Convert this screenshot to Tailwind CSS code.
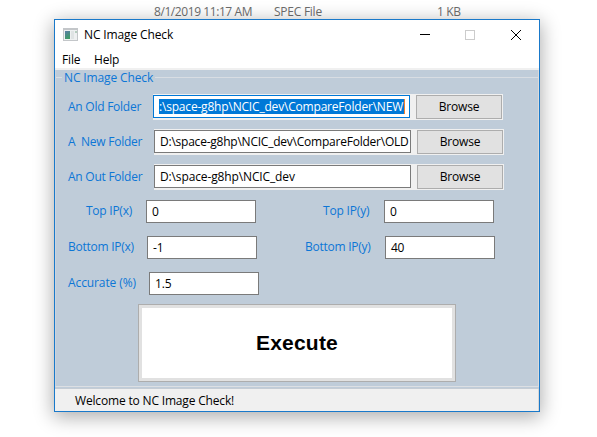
<!DOCTYPE html>
<html lang="en">
<head>
<meta charset="utf-8">
<title>NC Image Check</title>
<script src="https://cdn.jsdelivr.net/npm/@tailwindcss/browser@4"></script>
</head>
<body class="w-[597px] h-[437px] overflow-hidden bg-white font-['Open_Sans','Noto_Sans',sans-serif] text-[12px] leading-4 text-black tracking-[-0.17px] whitespace-nowrap">
<div class="flex h-[19px] pt-[4px] text-[#6d6d6d]">
  <span class="ml-[154px] w-[120px] tracking-[-0.42px]">8/1/2019 11:17 AM</span>
  <span class="w-[163px] tracking-[-0.25px]">SPEC File</span>
  <span class="tracking-[-0.35px]">1 KB</span>
</div>
<main class="relative ml-[54px] w-[486px] h-[393px] border border-[#1979ca] bg-white flex flex-col shadow-[0_4px_18px_1px_rgba(0,0,0,0.33)]">
  <header class="h-[29px] flex items-center pl-[8px]">
    <svg width="16" height="14" viewBox="0 0 16 14" shape-rendering="crispEdges">
      <defs><linearGradient id="g" x2="0.4" y2="1"><stop stop-color="#5a7ca8"/><stop offset="1" stop-color="#3f9a68"/></linearGradient></defs>
      <path fill="#c3c6c9" d="M0 0h15v13H0z"/><path fill="#eef0f1" d="M1 2h13v10H1z"/>
      <path fill="url(#g)" d="M2 3h5v8H2z"/><path fill="#dfe3e4" d="M8 3h3v8H8z"/><path fill="#b5cdbf" d="M12 3h2v2h-2z"/>
    </svg>
    <h1 class="ml-[5px] tracking-[-0.13px]">NC Image Check</h1>
    <svg class="ml-auto mr-[17px]" width="103" height="12" viewBox="0 0 103 12" fill="none" shape-rendering="crispEdges">
      <path stroke="#000" d="M1 5.500h10"/>
      <path stroke="#ccc" d="M46.500 1.500h9v9h-9z"/>
      <path stroke="#000" stroke-width="1" shape-rendering="auto" d="M92 1l10 10M102 1L92 11"/>
    </svg>
  </header>
  <nav class="h-[19px] flex pl-[7px] pt-[3px]"><span class="w-[32px]">File</span><span>Help</span></nav>
  <div class="h-[2px] bg-[#f0f0f0]"></div>
  <section class="h-[319px] bg-[#bfccd9] border-b border-[#c5ccd4] text-[#0c76d6]">
    <div class="h-[317px] border-b border-r border-l border-b-[#dcdfe3] border-r-[#dcdcdc] border-l-[#cbd4df]">
      <div class="h-[16px] flex items-start"><i class="mt-[7px] h-px w-[6px] bg-[#d8dde3]"></i><h2 class="w-[93px] pl-[2px] tracking-[-0.13px]">NC Image Check</h2><i class="mt-[7px] h-px flex-1 bg-[#d8dde3]"></i></div>

      <div class="mt-[8px] h-[26px] flex">
        <label class="w-[85px] pl-[12px] pt-[5px] tracking-[-0.25px]">An Old Folder</label>
        <div class="ml-[12px] w-[350px] bg-[#f0f0f0] flex items-start pt-px text-black">
          <div class="w-[257px] h-[23px] border border-[#0078d7] bg-white px-[5px] pt-[3px]"><div class="h-[15px] w-[246px] bg-[#0078d7] text-white border-r border-[#f08030] leading-[15px] tracking-[-0.19px]">:\space-g8hp\NCIC_dev\CompareFolder\NEW</div></div>
          <div class="ml-[6px] w-[86px] h-[24px] border border-[#adadad] bg-[#e1e1e1] text-center pt-[3px]">Browse</div>
        </div>
      </div>
      <div class="mt-[9px] h-[26px] flex">
        <label class="w-[86px] pl-[12px] pt-[5px] whitespace-pre tracking-[-0.25px]">A  New Folder</label>
        <div class="ml-[12px] w-[350px] bg-[#f0f0f0] flex items-start pt-px text-black">
          <div class="w-[257px] h-[23px] border border-[#7a7a7a] bg-white pl-[5px] pt-[3px] leading-[15px] tracking-[-0.23px]">D:\space-g8hp\NCIC_dev\CompareFolder\OLD</div>
          <div class="ml-[6px] w-[86px] h-[24px] border border-[#adadad] bg-[#e1e1e1] text-center pt-[3px]">Browse</div>
        </div>
      </div>
      <div class="mt-[9px] h-[26px] flex">
        <label class="w-[86px] pl-[12px] pt-[5px] tracking-[-0.25px]">An Out Folder</label>
        <div class="ml-[12px] w-[350px] bg-[#f0f0f0] flex items-start pt-px text-black">
          <div class="w-[257px] h-[23px] border border-[#7a7a7a] bg-white px-[5px] pt-[3px] leading-[15px] tracking-[-0.13px]">D:\space-g8hp\NCIC_dev</div>
          <div class="ml-[6px] w-[86px] h-[24px] border border-[#adadad] bg-[#e1e1e1] text-center pt-[3px]">Browse</div>
        </div>
      </div>

      <div class="mt-[10px] h-[23px] flex">
        <label class="w-[90px] pl-[30px] pt-[3px] tracking-[-0.25px]">Top IP(x)</label>
        <div class="w-[110px] border border-[#7a7a7a] bg-white px-[5px] pt-[3px] leading-[15px] text-black">0</div>
        <label class="w-[128px] pl-[67px] pt-[3px]">Top IP(y)</label>
        <div class="w-[110px] border border-[#7a7a7a] bg-white px-[5px] pt-[3px] leading-[15px] text-black">0</div>
      </div>
      <div class="mt-[13px] h-[23px] flex">
        <label class="w-[91px] pl-[12px] pt-[3px] tracking-[-0.25px]">Bottom IP(x)</label>
        <div class="w-[110px] border border-[#7a7a7a] bg-white px-[5px] pt-[3px] leading-[15px] text-black">-1</div>
        <label class="w-[128px] pl-[48px] pt-[3px] tracking-[-0.25px]">Bottom IP(y)</label>
        <div class="w-[110px] border border-[#7a7a7a] bg-white px-[5px] pt-[3px] leading-[15px] text-black tracking-[-0.4px]">40</div>
      </div>
      <div class="mt-[13px] h-[23px] flex">
        <label class="w-[93px] pl-[12px] pt-[3px] tracking-[-0.1px]">Accurate (%)</label>
        <div class="w-[110px] border border-[#7a7a7a] bg-white px-[5px] pt-[3px] leading-[15px] text-black">1.5</div>
      </div>
      <div class="mt-[9px] ml-[82px] w-[318px] h-[78px] border border-[#adadad] bg-[#e1e1e1] p-[3px]">
        <div class="h-full bg-white flex items-center justify-center font-['Liberation_Sans',Arial,sans-serif] text-[21px] font-bold tracking-[0.2px] text-black">Execute</div>
      </div>
    </div>
  </section>
  <footer class="flex-1 bg-[#f0f0f0] pl-[20px] pt-[4px] border-r border-[#d7d7d7]">Welcome to NC Image Check!</footer>
</main>
</body>
</html>
